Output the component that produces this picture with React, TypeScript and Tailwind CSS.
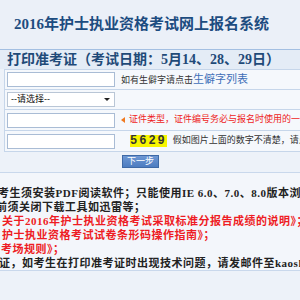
import React from "react";

const serif = { fontFamily: '"Liberation Serif", "Noto Sans CJK SC", serif' };
const sans = { fontFamily: '"Liberation Sans", "Noto Sans CJK SC", sans-serif' };

function Input() {
  return <div className="h-[15px] w-[108px] shrink-0 border border-[#a9bcd5] bg-white" />;
}

export default function App() {
  return (
    <div className="w-[300px] h-[300px] overflow-hidden bg-[#edf2f9]" style={serif}>
      {/* Title */}
      <div className="h-[49px] flex items-center pl-[14px] bg-[#ebf0f8]">
        <span className="whitespace-nowrap text-[15px] font-bold leading-none text-[#1d4c80]">
          2016年护士执业资格考试网上报名系统
        </span>
      </div>

      {/* Header band */}
      <div className="h-[20px] border-t border-[#a3bfe2] bg-[#e4ecf6] pl-[7px] flex items-center">
        <span className="whitespace-nowrap text-[14px] font-bold leading-none text-[#1f4a78]">
          打印准考证（考试日期：5月14、28、29日）
        </span>
      </div>

      {/* Form rows */}
      <div className="ml-[4px] border-l border-t border-[#c6d6ea] bg-[#f5f8fc]" style={sans}>
        <div className="h-[20px] border-b border-[#c6d6ea] flex items-center pl-[2px] gap-[6px]">
          <Input />
          <span className="whitespace-nowrap text-[9px] text-[#333]">
            如有生僻字请点击<span className="text-[11px] text-[#3f6fb8]">生僻字列表</span>
          </span>
        </div>
        <div className="h-[20px] border-b border-[#c6d6ea] flex items-center pl-[2px]">
          <div className="h-[15px] w-[108px] border border-[#b9c6d6] bg-white flex items-center justify-between pl-[3px] pr-[4px]">
            <span className="text-[9px] leading-none text-[#111] whitespace-nowrap">--请选择--</span>
            <span className="w-0 h-0 border-x-[3px] border-x-transparent border-t-[3px] border-t-[#222]" />
          </div>
        </div>
        <div className="h-[21px] border-b border-[#c6d6ea] flex items-center pl-[2px]">
          <Input />
          <span className="ml-[6px] w-0 h-0 border-y-[3px] border-y-transparent border-r-[4px] border-r-[#f07a20]" />
          <span className="ml-[4px] whitespace-nowrap text-[9px] text-[#ee1c24]">
            证件类型，证件编号务必与报名时使用的一致
          </span>
        </div>
        <div className="h-[21px] border-b border-[#c6d6ea] flex items-center pl-[2px]">
          <Input />
          <div className="ml-[15px] h-[12px] w-[40px] bg-[#f8f500] flex items-center justify-center">
            <span
              className="text-[12px] font-bold leading-none tracking-[2px] text-[#333]"
              style={{ fontFamily: '"Liberation Mono", monospace' }}
            >
              5629
            </span>
          </div>
          <span className="ml-[6px] whitespace-nowrap text-[9px] text-[#333]">
            假如图片上面的数字不清楚，请点击图片刷新
          </span>
        </div>
      </div>

      {/* Button row */}
      <div className="h-[20px] pt-[3px] pl-[122px]" style={sans}>
        <div className="h-[13px] w-[37px] border border-[#3e69a6] bg-gradient-to-b from-[#6e98d4] to-[#4d7cc0] flex items-center justify-center">
          <span className="text-[9px] leading-none text-white">下一步</span>
        </div>
      </div>

      {/* Notes */}
      <div className="border-t border-b border-[#c9d8ec] bg-[#f3f6fb] pt-[13px] text-[11px] leading-[14px] font-semibold tracking-[0.5px] whitespace-nowrap">
        <div className="ml-[-2px] text-[#222]">考生须安装PDF阅读软件；只能使用IE 6.0、7.0、8.0版本浏览器</div>
        <div className="ml-[-4px] text-[#222]">前须关闭下载工具如迅雷等；</div>
        <div className="ml-[2px] text-[#ee1c24]">关于2016年护士执业资格考试采取标准分报告成绩的说明》；</div>
        <div className="ml-[2px] text-[#ee1c24]">护士执业资格考试试卷条形码操作指南》；</div>
        <div className="ml-[1px] text-[#ee1c24]">考场规则》；</div>
        <div className="ml-[-1px] text-[#222]">证，如考生在打印准考证时出现技术问题，请发邮件至kaoshi@nhfpc.gov.cn</div>
      </div>
    </div>
  );
}
